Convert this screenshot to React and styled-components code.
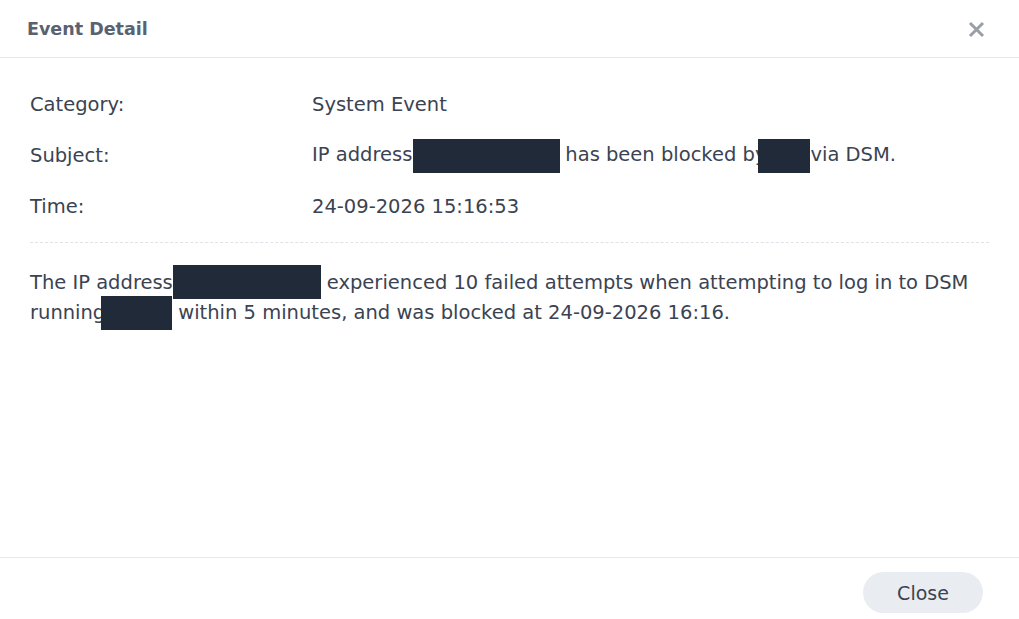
import React from 'react'
import styled, { createGlobalStyle } from 'styled-components'

const Global = createGlobalStyle`
  html, body { margin: 0; padding: 0; background: #fff; }
  body { font-family: "DejaVu Sans", Verdana, sans-serif; color: #3b4352; }
`

const Dialog = styled.div`
  width: 1019px;
  height: 619px;
  display: flex;
  flex-direction: column;
  background: #fff;
`

const Header = styled.div`
  height: 58px;
  display: flex;
  align-items: center;
  justify-content: space-between;
  padding: 0 33px 0 27px;
  border-bottom: 1px solid #e4e9ef;
  box-sizing: border-box;
`

const Title = styled.h1`
  margin: 0;
  font-size: 17.5px;
  font-weight: 700;
  color: #5a6271;
`

const CloseX = styled.button`
  border: none;
  background: transparent;
  padding: 0;
  width: 20px;
  height: 20px;
  display: flex;
  align-items: center;
  justify-content: center;
  cursor: pointer;
  margin-top: 1px;
`

const Body = styled.div`
  flex: 1;
  padding: 21px 30px 0 30px;
`

const Rows = styled.div`
  display: flex;
  flex-direction: column;
  padding-bottom: 10px;
  border-bottom: 1px dashed #dfe3e8;
`

const Row = styled.div`
  display: grid;
  grid-template-columns: 282px 1fr;
  height: 51px;
  align-items: center;
  font-size: 19.5px;
`

const Label = styled.span``

const Value = styled.span`
  white-space: nowrap;
`

const Redact = styled.span`
  display: inline-block;
  width: ${p => p.w}px;
  height: 34px;
  margin: -5px ${p => p.mr || 0}px -5px ${p => p.ml || 0}px;
  background: #212a39;
  vertical-align: middle;
  position: relative;
  top: ${p => p.dy || 0}px;
`

const Message = styled.p`
  margin: 25px 0 0 0;
  font-size: 19.5px;
  line-height: 30px;
`

const Footer = styled.div`
  height: 62px;
  border-top: 1px solid #e4e9ef;
  display: flex;
  align-items: center;
  justify-content: flex-end;
  padding: 0 36px 0 0;
  box-sizing: border-box;
`

const Button = styled.button`
  width: 120px;
  height: 41px;
  border: none;
  border-radius: 21px;
  background: #e9edf1;
  color: #3b4352;
  font-family: "DejaVu Sans", Verdana, sans-serif;
  font-size: 19px;
  cursor: pointer;
  margin-top: 8px;
`

export default function App() {
  return (
    <>
      <Global />
      <Dialog>
        <Header>
          <Title>Event Detail</Title>
          <CloseX aria-label="close">
            <svg width="17" height="17" viewBox="0 0 17 17">
              <path d="M2 2 L15 15 M15 2 L2 15" stroke="#9a9ea7" strokeWidth="3" strokeLinecap="butt" />
            </svg>
          </CloseX>
        </Header>
        <Body>
          <Rows>
            <Row>
              <Label>Category:</Label>
              <Value>System Event</Value>
            </Row>
            <Row>
              <Label>Subject:</Label>
              <Value>
                IP address<Redact w={147} ml={1} mr={5} />has been blocked by<Redact w={52} ml={-8} mr={0} />via DSM.
              </Value>
            </Row>
            <Row>
              <Label>Time:</Label>
              <Value>24-09-2026 15:16:53</Value>
            </Row>
          </Rows>
          <Message>
            The IP address<Redact w={148} ml={0} mr={6} dy={-2} />experienced 10 failed attempts when attempting to log in to DSM
            running<Redact w={71} ml={-4} mr={6} dy={-1} />within 5 minutes, and was blocked at 24-09-2026 16:16.
          </Message>
        </Body>
        <Footer>
          <Button>Close</Button>
        </Footer>
      </Dialog>
    </>
  )
}
